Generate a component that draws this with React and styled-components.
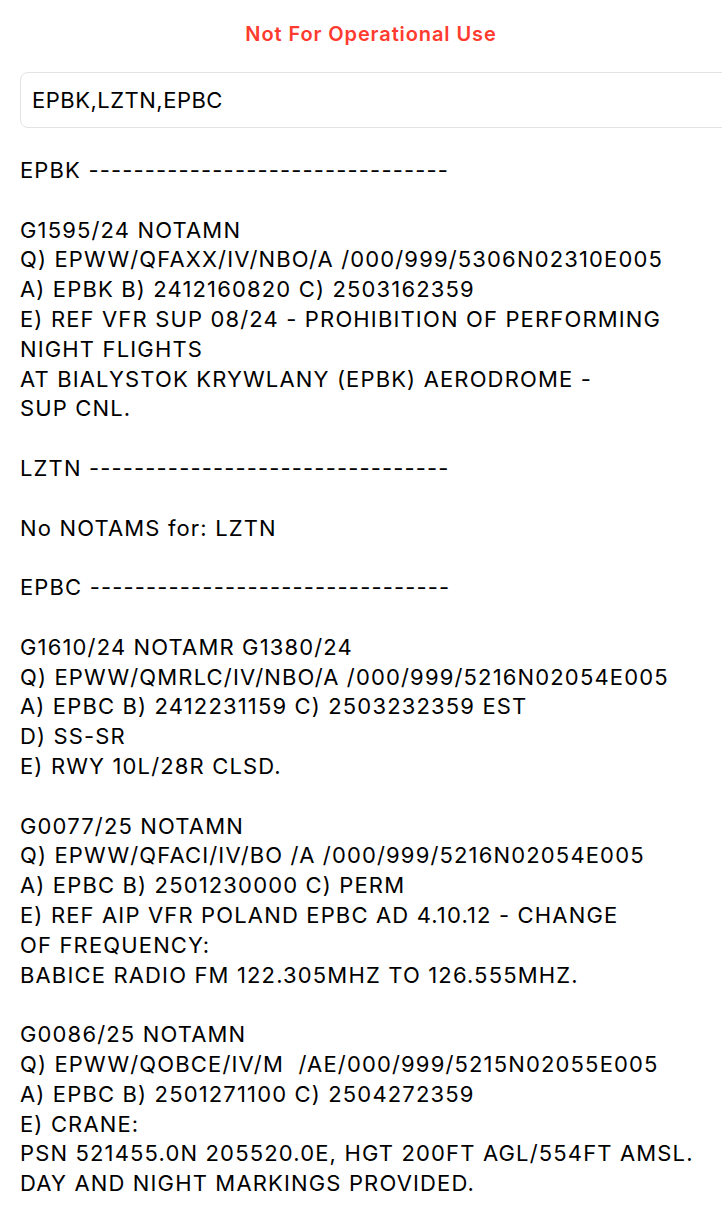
import React, { useState } from "react";
import styled, { createGlobalStyle } from "styled-components";

const GlobalStyle = createGlobalStyle`
  html, body {
    margin: 0;
    padding: 0;
    background: #ffffff;
  }
  body {
    font-family: Inter, "Liberation Sans", sans-serif;
    color: #000000;
    -webkit-font-smoothing: antialiased;
  }
`;

const Page = styled.div`
  width: 722px;
  min-height: 1219px;
  padding: 22px 0 0 20px;
  box-sizing: border-box;
  overflow: hidden;
`;

const Title = styled.h1`
  margin: 0;
  width: 702px;
  font-size: 20px;
  line-height: 24px;
  font-weight: 600;
  letter-spacing: 0.9px;
  color: #ff3b30;
  text-align: center;
`;

const SearchField = styled.input.attrs({ type: "text" })`
  display: block;
  margin-top: 26px;
  width: 720px;
  height: 56px;
  box-sizing: border-box;
  padding: 0 11px;
  border: 1px solid #e3e3e6;
  border-radius: 8px;
  outline: none;
  font-family: Inter, "Liberation Sans", sans-serif;
  font-size: 22px;
  letter-spacing: 0.5px;
  color: #000000;
  background: #ffffff;
`;

const Output = styled.div`
  margin-top: 28px;
  font-size: 22px;
  line-height: 29.8px;
  letter-spacing: 1.15px;
  white-space: pre;
`;

const Line = styled.div`
  height: 29.8px;
`;

const results = [
  {
    icao: "EPBK",
    notams: [
      [
        "G1595/24 NOTAMN",
        "Q) EPWW/QFAXX/IV/NBO/A /000/999/5306N02310E005",
        "A) EPBK B) 2412160820 C) 2503162359",
        "E) REF VFR SUP 08/24 - PROHIBITION OF PERFORMING",
        "NIGHT FLIGHTS",
        "AT BIALYSTOK KRYWLANY (EPBK) AERODROME -",
        "SUP CNL.",
      ],
    ],
  },
  { icao: "LZTN", notams: [] },
  {
    icao: "EPBC",
    notams: [
      [
        "G1610/24 NOTAMR G1380/24",
        "Q) EPWW/QMRLC/IV/NBO/A /000/999/5216N02054E005",
        "A) EPBC B) 2412231159 C) 2503232359 EST",
        "D) SS-SR",
        "E) RWY 10L/28R CLSD.",
      ],
      [
        "G0077/25 NOTAMN",
        "Q) EPWW/QFACI/IV/BO /A /000/999/5216N02054E005",
        "A) EPBC B) 2501230000 C) PERM",
        "E) REF AIP VFR POLAND EPBC AD 4.10.12 - CHANGE",
        "OF FREQUENCY:",
        "BABICE RADIO FM 122.305MHZ TO 126.555MHZ.",
      ],
      [
        "G0086/25 NOTAMN",
        "Q) EPWW/QOBCE/IV/M  /AE/000/999/5215N02055E005",
        "A) EPBC B) 2501271100 C) 2504272359",
        "E) CRANE:",
        "PSN 521455.0N 205520.0E, HGT 200FT AGL/554FT AMSL.",
        "DAY AND NIGHT MARKINGS PROVIDED.",
      ],
    ],
  },
];

// flatten results into the plain text lines the app prints
const buildLines = (list) => {
  let lines = [];
  list.forEach((item) => {
    lines.push(item.icao + " --------------------------------");
    lines.push("");
    if (item.notams.length === 0) {
      lines.push("No NOTAMS for: " + item.icao);
      lines.push("");
    }
    item.notams.forEach((notam) => {
      notam.forEach((l) => lines.push(l));
      lines.push("");
    });
  });
  return lines;
};

function App() {
  const [query, setQuery] = useState("EPBK,LZTN,EPBC");
  const lines = buildLines(results);

  return (
    <Page>
      <GlobalStyle />
      <Title>Not For Operational Use</Title>
      <SearchField value={query} onChange={(e) => setQuery(e.target.value)} />
      <Output>
        {lines.map((l, i) => (
          <Line key={i}>{l}</Line>
        ))}
      </Output>
    </Page>
  );
}

export default App;
